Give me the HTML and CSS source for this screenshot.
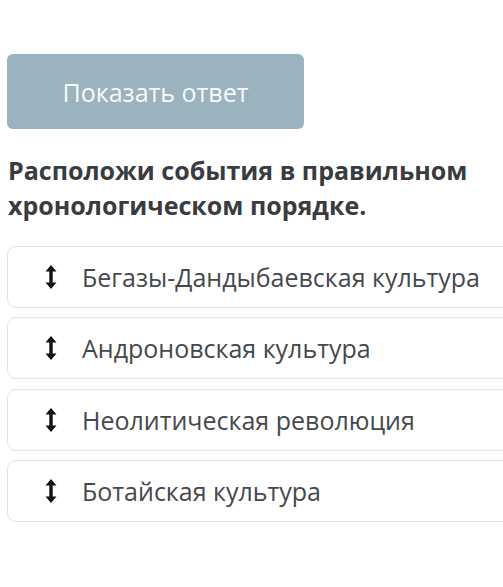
FILE: index.html
```html
<!DOCTYPE html>
<html>

<head>
  <title>Хронология</title>
  <link rel="stylesheet" href="styles.css">
</head>

<body>
  <div class="page">
    <div class="actions">
      <button class="show-answer" disabled>Показать ответ</button>
    </div>

    <h2 class="question">Расположи события в правильном хронологическом порядке.</h2>

    <ul class="sort-list">
      <li class="sort-item">
        <svg class="handle" width="12" height="26" viewBox="0 0 12 26">
          <path d="M6 1 L11.5 7.5 H7.7 V18.5 H11.5 L6 25 L0.5 18.5 H4.3 V7.5 H0.5 Z" fill="#111111" />
        </svg>
        <span>Бегазы-Дандыбаевская культура</span>
      </li>
      <li class="sort-item">
        <svg class="handle" width="12" height="26" viewBox="0 0 12 26">
          <path d="M6 1 L11.5 7.5 H7.7 V18.5 H11.5 L6 25 L0.5 18.5 H4.3 V7.5 H0.5 Z" fill="#111111" />
        </svg>
        <span>Андроновская культура</span>
      </li>
      <li class="sort-item">
        <svg class="handle" width="12" height="26" viewBox="0 0 12 26">
          <path d="M6 1 L11.5 7.5 H7.7 V18.5 H11.5 L6 25 L0.5 18.5 H4.3 V7.5 H0.5 Z" fill="#111111" />
        </svg>
        <span>Неолитическая революция</span>
      </li>
      <li class="sort-item">
        <svg class="handle" width="12" height="26" viewBox="0 0 12 26">
          <path d="M6 1 L11.5 7.5 H7.7 V18.5 H11.5 L6 25 L0.5 18.5 H4.3 V7.5 H0.5 Z" fill="#111111" />
        </svg>
        <span>Ботайская культура</span>
      </li>
    </ul>
  </div>
</body>

</html>
```

FILE: styles.css
```css
body {
  font-family: "Open Sans", Arial, sans-serif;
  margin: 0;
  background-color: #ffffff;
  overflow: hidden;
}

.page {
  padding: 54px 0 0 7px;
}

.actions {
  margin-bottom: 24px;
}

.show-answer {
  width: 297px;
  height: 75px;
  background-color: #9bb3bf;
  color: #f7f9fa;
  border: none;
  border-radius: 6px;
  font-family: "Open Sans", Arial, sans-serif;
  font-size: 25px;
  padding: 0;
}

.question {
  margin: 0 0 23px 1px;
  font-size: 25px;
  font-weight: 700;
  line-height: 35px;
  color: #383c40;
  width: 490px;
}

.sort-list {
  list-style: none;
  margin: 0;
  padding: 0;
  display: flex;
  flex-direction: column;
  gap: 9.4px;
  width: 520px;
}

.sort-item {
  display: flex;
  align-items: center;
  height: 60px;
  border: 1px solid #e3e3e3;
  border-radius: 9px;
  padding-left: 37px;
  font-size: 25px;
  color: #45494d;
}

.handle {
  margin-right: 25px;
}
```
